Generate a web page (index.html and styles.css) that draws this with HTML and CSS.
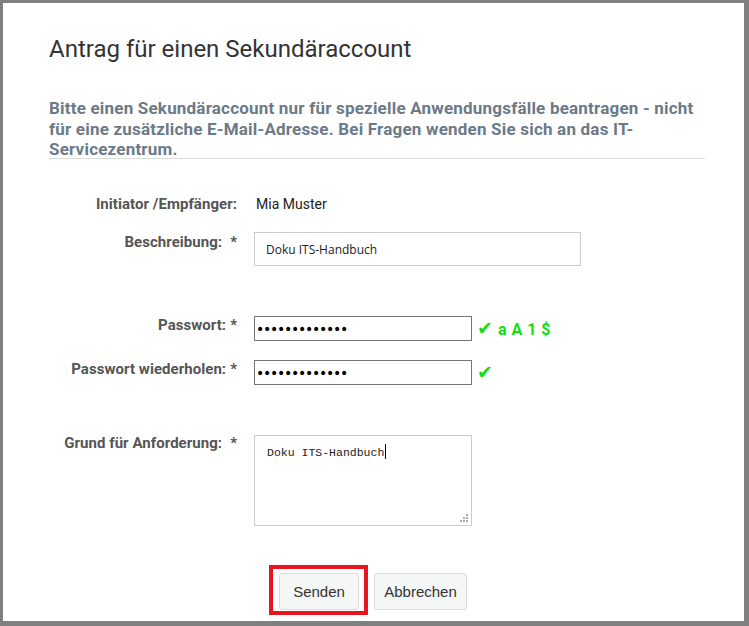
FILE: index.html
```html
<!DOCTYPE html>
<html lang="de">
<head>
<meta charset="utf-8">
<title>Antrag für einen Sekundäraccount</title>
<link rel="stylesheet" href="styles.css">
</head>
<body>
<div class="dialog">
  <h1 class="title">Antrag für einen Sekundäraccount</h1>
  <p class="intro">Bitte einen Sekundäraccount nur für spezielle Anwendungsfälle beantragen - nicht für eine zusätzliche E-Mail-Adresse. Bei Fragen wenden Sie sich an das IT-Servicezentrum.</p>
  <hr class="sep">
  <form class="form">
    <div class="row row-info">
      <label class="label">Initiator /Empfänger:</label>
      <div class="value">Mia Muster</div>
    </div>
    <div class="row row-desc">
      <label class="label">Beschreibung:<span class="req wide">*</span></label>
      <input class="text-input" type="text" value="Doku ITS-Handbuch">
    </div>
    <div class="row row-pw">
      <label class="label">Passwort:<span class="req">*</span></label>
      <input class="pw-input" type="password" value="geheimpasswor">
      <span class="ok"><span class="check">✔</span> a A 1 $</span>
    </div>
    <div class="row row-pw2">
      <label class="label">Passwort wiederholen:<span class="req">*</span></label>
      <input class="pw-input" type="password" value="geheimpasswor">
      <span class="ok"><span class="check">✔</span></span>
    </div>
    <div class="row row-reason">
      <label class="label">Grund für Anforderung:<span class="req wide">*</span></label>
      <div class="ta-wrap">
        <textarea class="textarea">Doku ITS-Handbuch</textarea>
        <span class="caret"></span>
        <svg class="grip" width="10" height="10" viewBox="0 0 10 10" aria-hidden="true">
          <rect x="7" y="1" width="2" height="2"/>
          <rect x="4" y="4" width="2" height="2"/>
          <rect x="7" y="4" width="2" height="2"/>
          <rect x="1" y="7" width="2" height="2"/>
          <rect x="4" y="7" width="2" height="2"/>
          <rect x="7" y="7" width="2" height="2"/>
        </svg>
      </div>
    </div>
    <div class="buttons">
      <span class="btn-wrap">
        <button type="button" class="btn">Senden</button>
        <span class="highlight"></span>
      </span>
      <button type="button" class="btn btn-cancel">Abbrechen</button>
    </div>
  </form>
</div>
</body>
</html>
```
FILE: styles.css
```css
html, body {
  margin: 0;
  padding: 0;
  background: #808080;
}
body {
  width: 749px;
  height: 626px;
  overflow: hidden;
}
.dialog {
  box-sizing: border-box;
  margin: 3px 5px 0 3px;
  width: 741px;
  height: 618px;
  background: #fff;
  padding: 32px 39px 0 46px;
  font-family: Roboto, "Liberation Sans", sans-serif;
}
.title {
  margin: 0;
  font-size: 24px;
  line-height: 28px;
  font-weight: 400;
  color: #333;
}
.intro {
  margin: 35px 0 0;
  font-size: 17px;
  line-height: 20.5px;
  letter-spacing: 0.2px;
  font-weight: 700;
  color: #6b7a88;
}
.sep {
  margin: -1.5px 0 0;
  border: 0;
  border-top: 1px solid #dcdcdc;
  height: 0;
}
.form {
  margin: 0;
}
.row {
  display: flex;
  align-items: flex-start;
}
.label {
  box-sizing: border-box;
  width: 188px;
  flex: none;
  text-align: right;
  font-size: 15px;
  line-height: 20px;
  letter-spacing: 0.05px;
  font-weight: 700;
  color: #555;
}
.req {
  margin-left: 4px;
}
.req.wide {
  margin-left: 8px;
}
.value {
  margin-left: 19px;
  font-size: 14px;
  line-height: 20px;
  color: #222;
}
.row-info { margin-top: 35px; }
.row-desc { margin-top: 18px; }
.row-pw { margin-top: 49px; }
.row-pw2 { margin-top: 18px; }
.row-reason { margin-top: 48px; }
.text-input {
  box-sizing: border-box;
  margin: 0 0 0 17px;
  width: 327px;
  height: 34px;
  border: 1px solid #ccc;
  padding: 0 11px;
  font-family: "Open Sans", sans-serif;
  font-size: 12px;
  color: #222;
  outline: none;
}
.pw-input {
  box-sizing: border-box;
  margin: 1px 0 0 17px;
  width: 218px;
  height: 25px;
  border: 1px solid #767676;
  padding: 0 1px;
  font-family: "DejaVu Sans", sans-serif;
  font-size: 14px;
  letter-spacing: -1.25px;
  color: #000;
  outline: none;
}
.ok {
  margin-left: 5px;
  padding-top: 3px;
  font-family: Roboto, sans-serif;
  font-weight: 700;
  font-size: 16px;
  line-height: 20px;
  color: #10e010;
  letter-spacing: 0.5px;
}
.check {
  font-family: "DejaVu Sans", sans-serif;
  font-size: 19px;
  line-height: 20px;
}
.ta-wrap {
  position: relative;
  margin: 2px 0 0 17px;
  width: 218px;
  height: 91px;
}
.textarea {
  box-sizing: border-box;
  display: block;
  width: 218px;
  height: 91px;
  margin: 0;
  border: 1px solid #ccc;
  padding: 10px 12px;
  font-family: "Liberation Mono", monospace;
  font-size: 11.5px;
  line-height: 14px;
  color: #222;
  resize: none;
  outline: none;
}
.caret {
  position: absolute;
  left: 131px;
  top: 9px;
  width: 1px;
  height: 15px;
  background: #000;
}
.grip {
  position: absolute;
  right: 3px;
  bottom: 3px;
  fill: #aaa;
}
.buttons {
  display: flex;
  gap: 15px;
  margin-top: 47px;
  padding-left: 230px;
}
.btn-wrap {
  position: relative;
  display: block;
}
.btn {
  box-sizing: border-box;
  display: block;
  height: 37px;
  width: 80px;
  margin: 0;
  padding: 0;
  background: #f5f6f6;
  border: 1px solid #dcdcdc;
  border-radius: 3px;
  font-family: "Liberation Sans", Arial, sans-serif;
  font-size: 15px;
  color: #333;
}
.btn-cancel {
  width: 93px;
}
.highlight {
  position: absolute;
  left: -10px;
  top: -8px;
  width: 99px;
  height: 50px;
  box-sizing: border-box;
  border: 4px solid #e8141e;
  pointer-events: none;
}
```
